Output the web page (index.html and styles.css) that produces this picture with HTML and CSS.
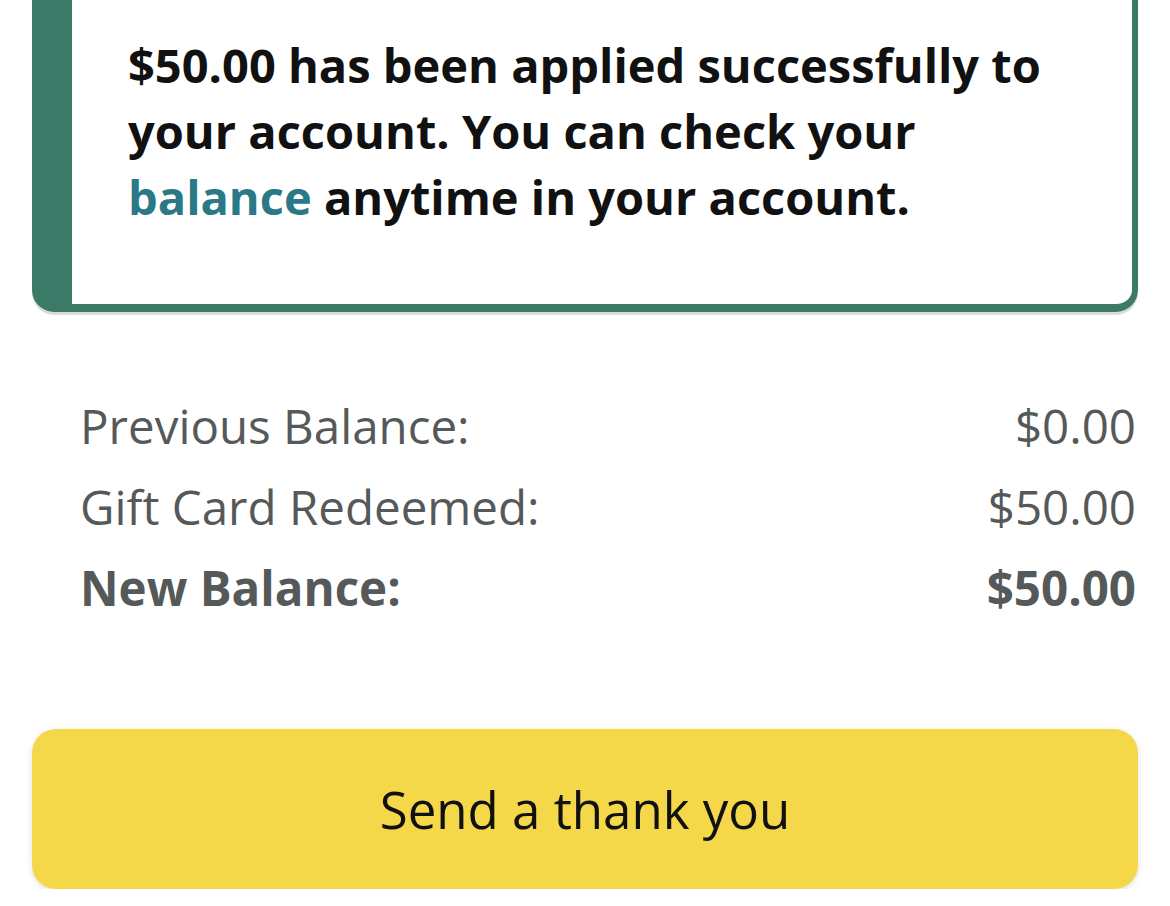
FILE: index.html
```html
<!DOCTYPE html>
<html>
<head>
    <title>Gift Card Redeemed</title>
    <link rel="stylesheet" href="styles.css">
</head>
<body>
    <div id="content">
        <div class="alert-box">
            <p class="alert-text">
                $50.00 has been applied successfully to your account. You can check your
                <a href="#" class="link">balance</a> anytime in your account.
            </p>
        </div>

        <div class="summary">
            <div class="summary-row">
                <span>Previous Balance:</span>
                <span>$0.00</span>
            </div>
            <div class="summary-row">
                <span>Gift Card Redeemed:</span>
                <span>$50.00</span>
            </div>
            <div class="summary-row total">
                <span>New Balance:</span>
                <span>$50.00</span>
            </div>
        </div>

        <button type="button" class="thank-button">Send a thank you</button>
    </div>
</body>
</html>
```

FILE: styles.css
```css
body {
    font-family: "Open Sans", Arial, sans-serif;
    margin: 0;
    padding: 0;
    background-color: #fff;
}

#content {
    padding: 0 32px;
}

/* success message, its top edge runs off the page */
.alert-box {
    margin-top: -40px;
    padding: 66px 56px 74px 56px;
    border: 6px solid #3a7a66;
    border-bottom-width: 8px;
    border-left-width: 40px;
    border-radius: 22px;
    box-shadow: 0 3px 0 #dcdcdc;
}

.alert-text {
    margin: 0;
    font-size: 47px;
    font-weight: 700;
    line-height: 66px;
    color: #111;
}

.link {
    color: #2b7887;
    text-decoration: none;
}

.summary {
    padding: 73px 2px 0 48px;
}

.summary-row {
    display: flex;
    justify-content: space-between;
    font-size: 47.5px;
    line-height: 81px;
    color: #555959;
}

.summary-row.total {
    font-weight: 700;
}

.thank-button {
    display: block;
    width: 100%;
    height: 160px;
    margin-top: 101px;
    border: none;
    border-radius: 24px;
    background-color: #f5d84a;
    box-shadow: 0 2px 6px rgba(0, 0, 0, 0.12);
    font-family: "Open Sans", Arial, sans-serif;
    font-size: 51px;
    color: #111;
}
```
